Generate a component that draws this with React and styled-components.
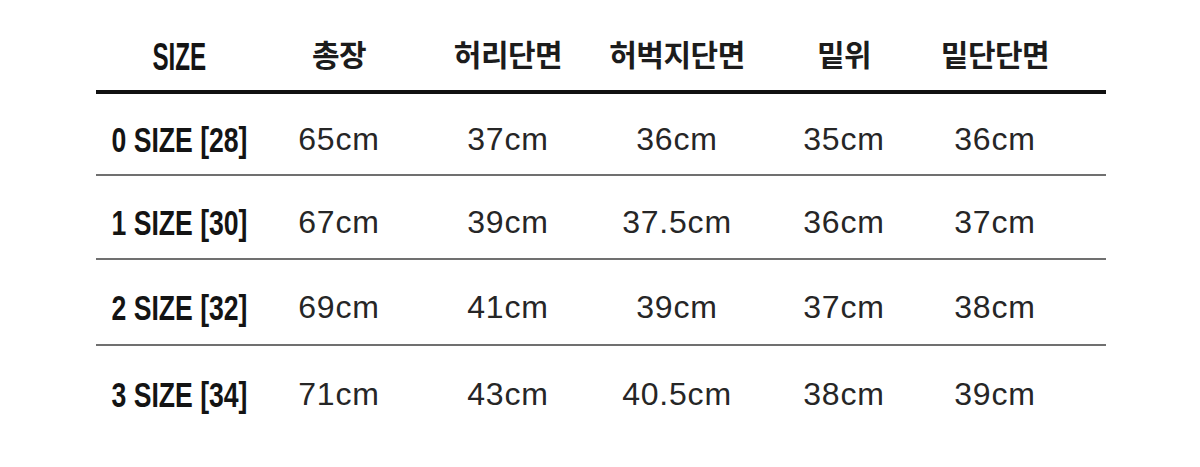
import React from "react";
import styled, { createGlobalStyle } from "styled-components";

const Global = createGlobalStyle`
  html, body { margin: 0; padding: 0; background: #ffffff; }
  body { width: 1200px; height: 467px; overflow: hidden; }
`;

const Page = styled.div`
  padding-left: 96px;
  width: 1010px;
`;

const Grid = styled.div`
  display: grid;
  grid-template-columns: 166px 154px 184px 154px 180px 122px 1fr;
  align-items: center;
  box-sizing: border-box;
  height: ${(p) => p.$h}px;
  padding-top: ${(p) => p.$pt}px;
  border-bottom: ${(p) => p.$bw}px solid ${(p) => p.$bc};
`;

const Cell = styled.div`
  display: flex;
  justify-content: center;
  align-items: center;
  white-space: nowrap;
`;

const Condensed = styled.span`
  display: inline-block;
  font-family: "Liberation Sans", Arial, sans-serif;
  font-weight: 700;
  font-size: ${(p) => p.$fs}px;
  line-height: 1;
  color: #141414;
  transform: scaleX(${(p) => p.$sx});
  transform-origin: center;
`;

const HeadText = styled.span`
  font-family: "Noto Sans CJK KR", "Noto Sans", sans-serif;
  font-weight: 700;
  font-size: 30px;
  line-height: 1;
  color: #1c1c1c;
  letter-spacing: -0.5px;
  margin-bottom: 6px;
`;

const Value = styled.span`
  font-family: "Liberation Sans", Arial, sans-serif;
  font-weight: 400;
  font-size: 32px;
  line-height: 1;
  letter-spacing: 0.8px;
  color: #262626;
`;

const headers = ["총장", "허리단면", "허벅지단면", "밑위", "밑단단면"];

const rows = [
  { label: "0 SIZE [28]", h: 82, values: ["65cm", "37cm", "36cm", "35cm", "36cm"] },
  { label: "1 SIZE [30]", h: 84, values: ["67cm", "39cm", "37.5cm", "36cm", "37cm"] },
  { label: "2 SIZE [32]", h: 86, values: ["69cm", "41cm", "39cm", "37cm", "38cm"] },
  { label: "3 SIZE [34]", h: 86, values: ["71cm", "43cm", "40.5cm", "38cm", "39cm"] },
];

export default function App() {
  return (
    <>
      <Global />
      <Page>
        <Grid $h={94} $pt={22} $bw={4} $bc="#111111">
          <Cell>
            <Condensed $fs={39} $sx={0.62}>SIZE</Condensed>
          </Cell>
          {headers.map((h) => (
            <Cell key={h}>
              <HeadText>{h}</HeadText>
            </Cell>
          ))}
        </Grid>
        {rows.map((r, i) => (
          <Grid
            key={r.label}
            $h={r.h}
            $pt={10}
            $bw={i === rows.length - 1 ? 0 : 2}
            $bc="#707070"
          >
            <Cell>
              <Condensed $fs={35} $sx={0.76}>{r.label}</Condensed>
            </Cell>
            {r.values.map((v, j) => (
              <Cell key={j}>
                <Value>{v}</Value>
              </Cell>
            ))}
          </Grid>
        ))}
      </Page>
    </>
  );
}
